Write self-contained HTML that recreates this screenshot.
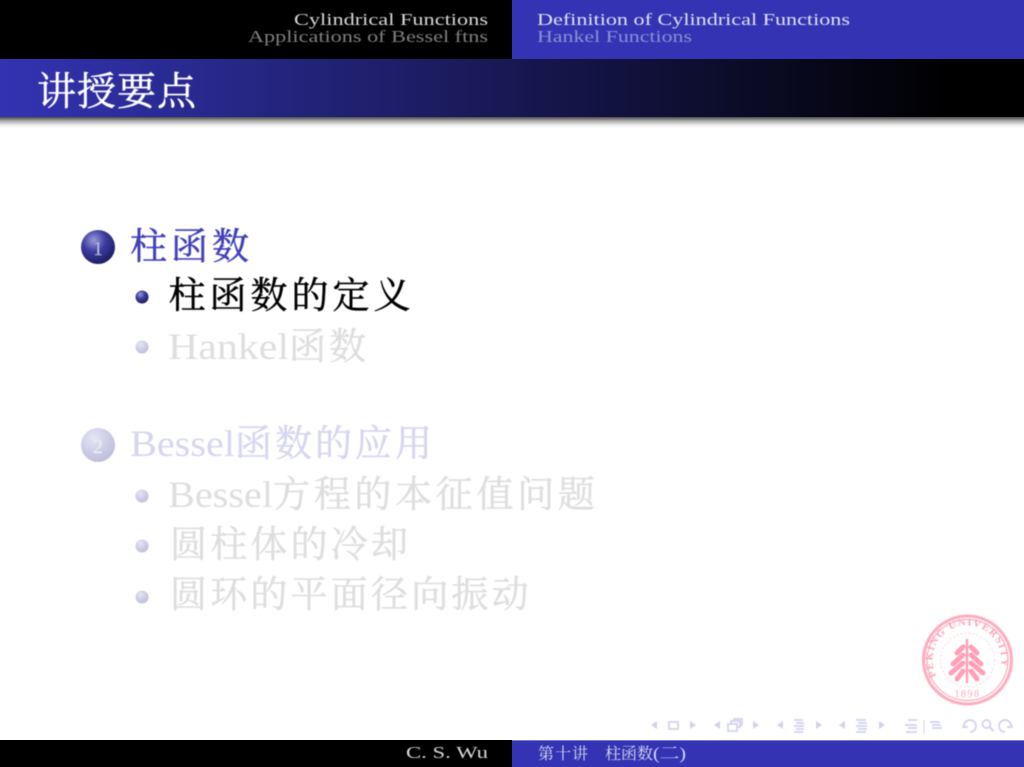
<!DOCTYPE html>
<html>
<head>
<meta charset="utf-8">
<title>讲授要点</title>
<style>
html,body{margin:0;padding:0;background:#fff;width:1024px;height:767px;overflow:hidden}
svg{display:block}
text{font-family:"Liberation Serif","Noto Serif CJK SC",serif}
.c{stroke-width:.45;paint-order:stroke}
</style>
</head>
<body>
<svg width="1024" height="767" viewBox="0 0 1024 767" xmlns="http://www.w3.org/2000/svg">
<defs>
<linearGradient id="tb" x1="0" x2="1" y1="0" y2="0">
<stop offset="0" stop-color="#3333b3"/><stop offset=".93" stop-color="#000"/><stop offset="1" stop-color="#000"/>
</linearGradient>
<linearGradient id="sh" x1="0" x2="0" y1="0" y2="1">
<stop offset="0" stop-color="#4a4a4a"/><stop offset=".35" stop-color="#a8a8a8"/><stop offset=".7" stop-color="#e8e8e8"/><stop offset="1" stop-color="#fff"/>
</linearGradient>
<radialGradient id="ball" cx=".38" cy=".3" r=".75">
<stop offset="0" stop-color="#9a9ad8"/><stop offset=".45" stop-color="#3d3da0"/><stop offset="1" stop-color="#1a1a5c"/>
</radialGradient>
<radialGradient id="fball" cx=".38" cy=".3" r=".75">
<stop offset="0" stop-color="#e6e6f5"/><stop offset=".5" stop-color="#cfcfe8"/><stop offset="1" stop-color="#bcbcd8"/>
</radialGradient>
<filter id="b" x="-5%" y="-5%" width="110%" height="110%"><feGaussianBlur stdDeviation="0.45"/></filter>
<path id="ringp" d="M 937 677 A 34.5 34.5 0 1 1 997 677"/>
</defs>

<rect x="0" y="0" width="512" height="59" fill="#000"/>
<rect x="512" y="0" width="512" height="59" fill="#3333b3"/>
<rect x="0" y="59" width="1024" height="58" fill="url(#tb)"/>
<rect x="0" y="117" width="1024" height="11" fill="url(#sh)"/>

<rect x="0" y="740" width="512" height="27" fill="#000"/>
<rect x="512" y="740" width="512" height="27" fill="#3333b3"/>
<rect x="512" y="740" width="512" height="1" fill="#7a7ace"/>

<g filter="url(#b)">
<text x="294" y="25" font-size="17" fill="#d6d6d6" textLength="194" lengthAdjust="spacingAndGlyphs">Cylindrical Functions</text>
<text x="248" y="42" font-size="17" fill="#7f7f7f" textLength="240" lengthAdjust="spacingAndGlyphs">Applications of Bessel ftns</text>
<text x="537" y="25" font-size="17" fill="#e0e0f4" textLength="313" lengthAdjust="spacingAndGlyphs">Definition of Cylindrical Functions</text>
<text x="537" y="42" font-size="17" fill="#8e8ed6" textLength="155" lengthAdjust="spacingAndGlyphs">Hankel Functions</text>

<text class="c" y="105" x="37 77 117 157" font-size="39" fill="#fff" stroke="#fff">讲授要点</text>

<circle cx="98" cy="247" r="17" fill="url(#ball)"/>
<text x="98" y="255" font-size="20" fill="#b8b8e4" text-anchor="middle">1</text>
<text class="c" y="259" x="130 171 212" font-size="37" fill="#3f3fb8" stroke="#3f3fb8">柱函数</text>

<circle cx="142" cy="297" r="6.5" fill="url(#ball)"/>
<text class="c" y="308" x="168.500 209.500 250.500 291.500 332.500 373.500" font-size="37" fill="#000" stroke="#000">柱函数的定义</text>

<circle cx="142" cy="347" r="6.5" fill="url(#fball)"/>
<text x="168" y="359" font-size="37" fill="#dedede" textLength="121" lengthAdjust="spacingAndGlyphs">Hankel</text>
<text class="c" y="359" x="289 329" font-size="37" fill="#dedede" stroke="#dedede">函数</text>

<circle cx="98" cy="445" r="17" fill="url(#fball)"/>
<text x="98" y="453" font-size="20" fill="#eeeef8" text-anchor="middle">2</text>
<text x="130" y="456" font-size="37" fill="#d6d6f0" textLength="105" lengthAdjust="spacingAndGlyphs">Bessel</text>
<text class="c" y="456" x="235 275 315 355 395" font-size="37" fill="#d6d6f0" stroke="#d6d6f0">函数的应用</text>

<circle cx="142" cy="496" r="6.5" fill="url(#fball)"/>
<text x="168" y="507" font-size="37" fill="#dedede" textLength="105" lengthAdjust="spacingAndGlyphs">Bessel</text>
<text class="c" y="507" x="273 313.700 354.400 395.100 435.800 476.500 517.200 557.900" font-size="37" fill="#dedede" stroke="#dedede">方程的本征值问题</text>

<circle cx="142" cy="546" r="6.5" fill="url(#fball)"/>
<text class="c" y="557" x="170 210.200 250.400 290.600 330.800 371" font-size="37" fill="#dedede" stroke="#dedede">圆柱体的冷却</text>

<circle cx="142" cy="597" r="6.5" fill="url(#fball)"/>
<text class="c" y="607" x="170 210.200 250.400 290.600 330.800 371 411.200 451.400 491.600" font-size="37" fill="#dedede" stroke="#dedede">圆环的平面径向振动</text>

<text x="406" y="758" font-size="17" fill="#d6d6d6" textLength="82" lengthAdjust="spacingAndGlyphs">C. S. Wu</text>
<text y="759" x="538 555 572" font-size="16" fill="#dcdcf2">第十讲</text>
<text y="759" x="605 621 637" font-size="16" fill="#dcdcf2">柱函数</text>
<text x="653" y="759" font-size="17" fill="#dcdcf2" textLength="33" lengthAdjust="spacingAndGlyphs">(二)</text>

<!-- logo -->
<g fill="none" stroke="#ffabbd">
<circle cx="967.500" cy="660" r="44" stroke-width="3"/>
<circle cx="967.500" cy="660" r="40.500" stroke-width="1.200"/>
<circle cx="967.500" cy="660" r="27" stroke-width="1" stroke="#ffd4dc" stroke-dasharray="2 2"/>
</g>
<text font-size="10.500" font-weight="bold" fill="#ffa3b8" font-family="Liberation Sans, sans-serif" letter-spacing="1.300"><textPath href="#ringp" startOffset="1">PEKING UNIVERSITY</textPath></text>
<text x="967.500" y="697" font-size="10" fill="#ffa3b8" text-anchor="middle" letter-spacing="1.500" font-family="Liberation Sans, sans-serif">1898</text>
<g fill="none" stroke="#ffa0b6" stroke-width="5" stroke-linecap="round">
<path d="M967 640V682" stroke-width="2.500"/>
<path d="M963 647L957 653M971 647L977 653"/>
<path d="M963 655L953 664M971 655L981 664"/>
<path d="M963 663L951 673M971 663L983 673"/>
<path d="M963 671L957 679M971 671L977 679"/>
</g>

<!-- nav icons -->
<g fill="#d2d2ee">
<path d="M657 721v8l-6-4zM690 721v8l6-4z"/>
<path d="M720 721v8l-6-4zM753 721v8l6-4z"/>
<path d="M783 721v8l-6-4zM816 721v8l6-4z"/>
<path d="M845 721v8l-6-4zM879 721v8l6-4z"/>
</g>
<g fill="none" stroke="#d2d2ee" stroke-width="1.700">
<rect x="669" y="722" width="9" height="7"/>
<rect x="728" y="724" width="9" height="7"/>
<path d="M731 724v-3h9v6h-3M734 721v-2h8v6h-2"/>
<path d="M794 720h9M796 723h8M794 726h10M796 729h8M794 732h9"/>
<path d="M856 720h10M858 723h9M856 726h11M858 729h9M856 732h10"/>
<path d="M908 720h9M905 725h12M908 728h9M906 732h11"/>
<path d="M924 720v13" stroke-width="1"/>
<path d="M930 722h10M932 725h9M932 728h10"/>
<path d="M965 722l-2 5 5 0M964 726a6 6 0 1 1 6 6"/>
<circle cx="986.500" cy="724" r="4"/>
<path d="M989.500 727l4 4" stroke-width="2"/>
<path d="M1010 722l2 5-5 0M1011 726a6 6 0 1 0 -6 6"/>
</g>
</g>
</svg>
</body>
</html>
